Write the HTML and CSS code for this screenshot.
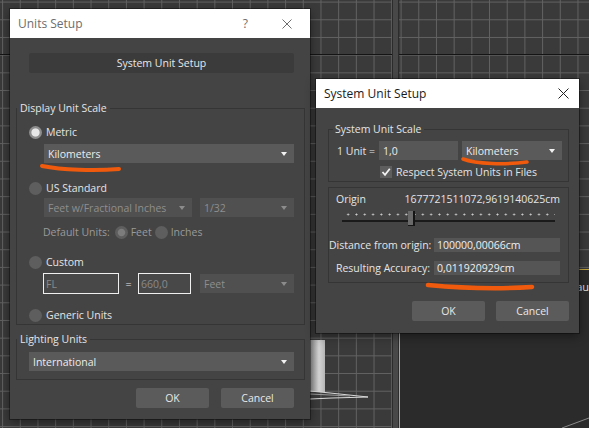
FILE: index.html
```html
<!DOCTYPE html>
<html lang="en">
<head>
    <meta charset="UTF-8">
    <title>Units Setup</title>
    <link rel="stylesheet" href="styles.css">
</head>
<body>
    <div class="scene">
        <div class="viewport vp-left">
            <div class="object"></div>
            <svg class="blade" width="70" height="14" viewBox="0 0 70 14">
                <path d="M0 3 L20 5 L58 9 L22 10 L0 11" fill="none" stroke="#d8d8d8" stroke-width="1"/>
                <path d="M0 6 L40 8" fill="none" stroke="#9a9a9a" stroke-width="1"/>
            </svg>
        </div>
        <div class="divider"></div>
        <div class="viewport vp-top-right"></div>
        <div class="vp-persp">
            <span class="vp-label">[Defau</span>
        </div>
    </div>

    <!-- Units Setup -->
    <div class="dialog units-dialog">
        <div class="titlebar inactive">
            <span class="title">Units Setup</span>
            <span class="help">?</span>
            <svg class="close" width="10" height="10" viewBox="0 0 10 10">
                <path d="M0.5 0.5 L9.5 9.5 M9.5 0.5 L0.5 9.5" stroke="#6d6d6d" stroke-width="1"/>
            </svg>
        </div>
        <div class="dialog-body">
            <button class="wide-btn">System Unit Setup</button>

            <fieldset class="group display-group">
                <legend>Display Unit Scale</legend>
                <div class="option first"><span class="radio on"></span>Metric</div>
                <div class="select metric-select">Kilometers</div>

                <div class="option us-option"><span class="radio"></span>US Standard</div>
                <div class="pair">
                    <div class="select disabled frac">Feet w/Fractional Inches</div>
                    <div class="select disabled grow">1/32</div>
                </div>
                <div class="default-units">
                    <span>Default Units:</span>
                    <span class="radio dim-on"></span><span>Feet</span>
                    <span class="radio"></span><span>Inches</span>
                </div>

                <div class="option custom-option"><span class="radio"></span>Custom</div>
                <div class="custom-row">
                    <div class="text-input fl">FL</div>
                    <span class="equals">=</span>
                    <div class="text-input num">660,0</div>
                    <div class="select disabled grow">Feet</div>
                </div>

                <div class="option generic-option"><span class="radio"></span>Generic Units</div>
            </fieldset>

            <fieldset class="group lighting-group">
                <legend>Lighting Units</legend>
                <div class="select light-select">International</div>
            </fieldset>

            <div class="actions">
                <button class="btn">OK</button>
                <button class="btn">Cancel</button>
            </div>
        </div>
    </div>

    <!-- System Unit Setup -->
    <div class="dialog system-dialog">
        <div class="titlebar">
            <span class="title">System Unit Setup</span>
            <svg class="close" width="11" height="11" viewBox="0 0 11 11">
                <path d="M0.5 0.5 L10.5 10.5 M10.5 0.5 L0.5 10.5" stroke="#222" stroke-width="1"/>
            </svg>
        </div>
        <div class="dialog-body">
            <fieldset class="group scale-group">
                <legend>System Unit Scale</legend>
                <div class="unit-row">
                    <span class="unit-label">1 Unit =</span>
                    <div class="text-input value">1,0</div>
                    <div class="select grow">Kilometers</div>
                </div>
                <div class="check-row">
                    <span class="checkbox">
                        <svg width="12" height="12" viewBox="0 0 12 12">
                            <path d="M2.5 6 L5 8.8 L9.8 2.8" fill="none" stroke="#f2f2f2" stroke-width="1.8"/>
                        </svg>
                    </span>
                    Respect System Units in Files
                </div>
            </fieldset>

            <div class="group-box">
                <div class="origin-row">
                    <span>Origin</span>
                    <span>1677721511072,9619140625cm</span>
                </div>
                <div class="slider">
                    <div class="thumb"></div>
                </div>
                <div class="field-row">
                    <span class="field-label">Distance from origin:</span>
                    <div class="field">100000,00066cm</div>
                </div>
                <div class="field-row second">
                    <span class="field-label">Resulting Accuracy:</span>
                    <div class="field">0,011920929cm</div>
                </div>
            </div>

            <div class="actions sys-actions">
                <button class="btn">OK</button>
                <button class="btn">Cancel</button>
            </div>
        </div>
    </div>

    <!-- marker strokes drawn over the screenshot -->
    <svg class="marks" width="589" height="428" viewBox="0 0 589 428">
        <path d="M42 166 C62 170 95 171 119 169" fill="none" stroke="#f05a0c" stroke-width="4" stroke-linecap="round"/>
        <path d="M463 159 C476 164 505 165 527 162" fill="none" stroke="#f05a0c" stroke-width="3.5" stroke-linecap="round"/>
        <path d="M428 285 C460 288 500 289 532 287" fill="none" stroke="#f05a0c" stroke-width="4.5" stroke-linecap="round"/>
        <path d="M562 428 L589 418" fill="none" stroke="#8a8a8a" stroke-width="1"/>
    </svg>
</body>
</html>
```

FILE: styles.css
```css
* {
    box-sizing: border-box;
}
body {
    margin: 0;
    width: 589px;
    height: 428px;
    overflow: hidden;
    position: relative;
    font-family: "Open Sans", "Noto Sans", sans-serif;
    font-size: 10.5px;
    color: #e4e4e4;
    background: #2b2b2b;
}

/* viewports behind the dialogs */
.scene {
    display: grid;
    grid-template-columns: 392px 7px 190px;
    grid-template-rows: 269px 159px;
    height: 428px;
}
.viewport {
    position: relative;
    background-color: #3a3a3a;
    background-image:
        linear-gradient(#141414, #141414),
        linear-gradient(#626262 1px, transparent 1px),
        linear-gradient(90deg, #626262 1px, transparent 1px);
    background-size: 100% 1px, 17.7px 17.7px, 17.7px 17.7px;
    background-repeat: no-repeat, repeat, repeat;
    background-position: 0 54px, 0 1.6px, 2.1px 0;
}
.vp-left {
    grid-row: 1 / 3;
}
.vp-top-right {
    background-position: 0 54px, 0 1.6px, 1.6px 0;
}
.divider {
    grid-row: 1 / 3;
    background: #484848;
    border-left: 1px solid #2c2c2c;
    border-right: 1px solid #2c2c2c;
}
.vp-persp {
    background: #2b2b2b;
    border-top: 1px solid #c4a63c;
    border-left: 1px solid #c4a63c;
    padding-top: 10px;
}
.vp-label {
    display: block;
    line-height: 14px;
    font-size: 11px;
    text-align: right;
    color: #e0e0e0;
    white-space: nowrap;
}
.object {
    position: absolute;
    left: 310px;
    top: 340px;
    width: 15px;
    height: 52px;
    background: linear-gradient(90deg, #8c8c8c, #d6d6d6 60%, #b4b4b4);
}
.blade {
    position: absolute;
    left: 310px;
    top: 388px;
}

/* dialogs */
.dialog {
    position: absolute;
    display: flex;
    flex-direction: column;
    background: #444444;
    box-shadow: 0 0 0 1px rgba(0, 0, 0, 0.35), 0 3px 10px rgba(0, 0, 0, 0.45);
}
.units-dialog {
    left: 10px;
    top: 9px;
    width: 300px;
    height: 410px;
}
.system-dialog {
    left: 316px;
    top: 79px;
    width: 263px;
    height: 254px;
}
.titlebar {
    display: flex;
    align-items: center;
    flex-shrink: 0;
    height: 29px;
    padding-left: 8px;
    background: #ffffff;
    color: #1a1a1a;
    font-size: 12px;
}
.titlebar .title {
    flex: 1;
}
.titlebar.inactive {
    color: #6d6d6d;
}
.help {
    margin-right: 34px;
    font-size: 12px;
}
.units-dialog .close {
    margin-right: 18px;
}
.system-dialog .close {
    margin-right: 10px;
}
.dialog-body {
    display: flex;
    flex-direction: column;
    flex: 1;
}

button {
    font-family: inherit;
    font-size: inherit;
    color: #e8e8e8;
    border: none;
    border-radius: 2px;
    padding: 0;
}
.wide-btn {
    height: 20px;
    margin: 15px 16px 0 19px;
    background: #3b3b3b;
}

/* group boxes */
.group {
    display: flex;
    flex-direction: column;
    min-width: 0;
    margin: 0;
    padding: 0;
    border: 1px solid #353535;
}
.group legend {
    padding: 0 3px;
    line-height: 14px;
}
.display-group {
    margin: 28px 5px 0 6px;
    padding-bottom: 2px;
}
.lighting-group {
    margin: 7px 5px 0 6px;
    padding-bottom: 8px;
}

.option {
    display: flex;
    align-items: center;
    gap: 4px;
    height: 14px;
    margin-left: 12px;
}
.option.first {
    margin-top: 10px;
}
.us-option {
    margin-top: 18px;
}
.custom-option {
    margin-top: 16px;
}
.generic-option {
    margin-top: 14px;
}
.radio {
    flex-shrink: 0;
    width: 13px;
    height: 13px;
    border-radius: 50%;
    background: #5e5e5e;
}
.radio.on {
    background: radial-gradient(circle, #e8e8e8 0 3.6px, #8e8e8e 4.6px);
}
.radio.dim-on {
    background: radial-gradient(circle, #7c7c7c 0 3.2px, #5e5e5e 4.2px);
}

.select {
    display: flex;
    align-items: center;
    justify-content: space-between;
    height: 19px;
    padding: 0 7px 0 4px;
    background: #5a5a5a;
    color: #ececec;
    white-space: nowrap;
}
.select::after {
    content: "";
    border-left: 3px solid transparent;
    border-right: 3px solid transparent;
    border-top: 4px solid #f2f2f2;
}
.select.disabled {
    background: #505050;
    color: #8e8e8e;
}
.select.disabled::after {
    border-top-color: #8c8c8c;
}
.select.grow {
    flex: 1;
}
.metric-select {
    margin: 5px 10px 0 27px;
}
.light-select {
    margin: 6px 10px 0 12px;
}
.pair {
    display: flex;
    gap: 8px;
    margin: 3px 10px 0 27px;
}
.frac {
    flex: 0 0 148px;
}
.default-units {
    display: flex;
    align-items: center;
    gap: 3px;
    height: 14px;
    margin: 8px 0 0 26px;
    color: #9a9a9a;
}
.default-units .dim-on {
    margin-left: 2px;
}
.custom-row {
    display: flex;
    align-items: center;
    margin: 4px 10px 0 26px;
}
.text-input {
    display: flex;
    align-items: center;
    height: 21px;
    padding-left: 2px;
    border: 1px solid #f0f0f0;
    background: #484848;
    color: #8a8a8a;
}
.text-input.fl {
    width: 76px;
}
.text-input.num {
    width: 53px;
}
.equals {
    width: 19px;
    text-align: center;
    color: #e4e4e4;
}
.custom-row .select {
    margin-left: 9px;
}

.actions {
    display: flex;
    justify-content: flex-end;
    gap: 12px;
    margin: 8px 16px 0 0;
}
.btn {
    width: 73px;
    height: 20px;
    background: #5b5b5b;
}

/* system unit setup */
.scale-group {
    margin: 14px 10px 0 12px;
    padding-bottom: 3px;
}
.scale-group legend {
    margin-left: 4px;
    padding: 0 2px;
}
.unit-row {
    display: flex;
    align-items: center;
    height: 19px;
    margin: 5px 6px 0 8px;
}
.unit-label {
    width: 42px;
}
.text-input.value {
    width: 79px;
    height: 19px;
    margin-right: 4px;
    padding-left: 4px;
    border: none;
    background: #575757;
    color: #ececec;
}
.check-row {
    display: flex;
    align-items: center;
    gap: 4px;
    height: 12px;
    margin: 6px 0 0 51px;
}
.checkbox {
    display: flex;
    width: 12px;
    height: 12px;
    background: #5e5e5e;
}
.group-box {
    margin: 5px 10px 0 12px;
    padding: 4px 8px 7px 0;
    border: 1px solid #353535;
}
.origin-row {
    display: flex;
    justify-content: space-between;
    line-height: 14px;
    margin-left: 7px;
}
.slider {
    display: flex;
    height: 16px;
    margin: 5px 5px 0 13px;
    background:
        linear-gradient(#1a1a1a, #1a1a1a) 0 9px / 100% 2px no-repeat,
        radial-gradient(circle, #cfcfcf 0 0.7px, transparent 1.3px) 2px 2px / 8.3px 3px repeat-x;
}
.thumb {
    width: 7px;
    height: 15px;
    margin-left: 66px;
    background: #6a6a6a;
    border-right: 2px solid #151515;
    border-bottom: 1px solid #151515;
}
.field-row {
    display: flex;
    align-items: center;
    margin-top: 11px;
}
.field-row.second {
    margin-top: 9px;
}
.field-label {
    width: 105px;
    padding-right: 4px;
    text-align: right;
    white-space: nowrap;
}
.field {
    display: flex;
    align-items: center;
    width: 126px;
    height: 14px;
    padding-left: 3px;
    background: #555555;
    color: #f0f0f0;
}
.sys-actions {
    gap: 11px;
    margin: 18px 10px 0 0;
}

.marks {
    position: absolute;
    left: 0;
    top: 0;
    pointer-events: none;
}
```
